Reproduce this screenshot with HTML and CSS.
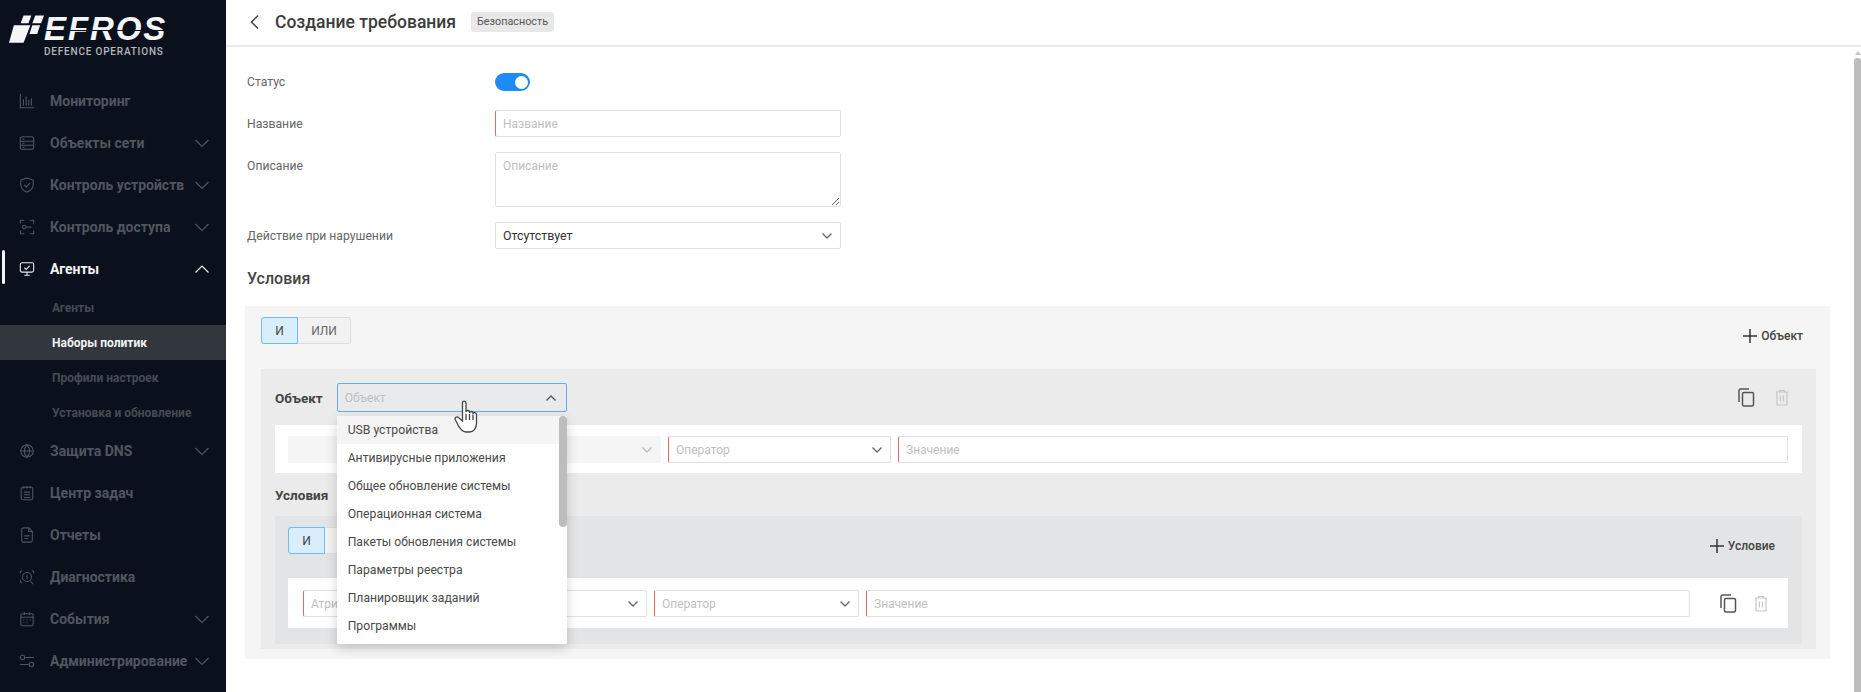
FILE: index.html
```html
<!DOCTYPE html>
<html lang="ru">
<head>
<meta charset="utf-8">
<title>Создание требования</title>
<link rel="stylesheet" href="styles.css">
</head>
<body>
<div class="app">
  <aside class="sidebar">
    <div class="logo">
      <svg class="logo-mark" width="35" height="30" viewBox="0 0 36 30"><path d="M15 0h8l-3 8h-8zM27 0h9l-3 8h-9zM5 10h17l-7 18H0zM24 10h8l-3 9h-8z" fill="#f4f5f6"/></svg>
      <div class="logo-text">
        <div class="logo-name">EFROS</div>
        <div class="logo-sub">DEFENCE OPERATIONS</div>
      </div>
    </div>
    <nav class="nav">
      <div class="nav-item"><svg class="nav-icon" viewBox="0 0 18 18"><path d="M1.500 1v15.500h15.500M5 7v7M8 4v10M11 8v6M14 6v8"/></svg><span class="nav-label">Мониторинг</span></div>
      <div class="nav-item"><svg class="nav-icon" viewBox="0 0 18 18"><rect x="1.500" y="2" width="15" height="14" rx="2"/><path d="M1.500 7h15M1.500 11.500h15M4 4.500h2M4 9.200h2M4 13.700h2"/></svg><span class="nav-label">Объекты сети</span><svg class="nav-chev" viewBox="0 0 16 10"><path d="M1.500 2l6.500 6.500L14.500 2"/></svg></div>
      <div class="nav-item"><svg class="nav-icon" viewBox="0 0 18 18"><path d="M9 1l7 2.500v5c0 4-3 7-7 8.500-4-1.500-7-4.500-7-8.500v-5zM6 9l2.200 2.200L12.200 7"/></svg><span class="nav-label">Контроль устройств</span><svg class="nav-chev" viewBox="0 0 16 10"><path d="M1.500 2l6.500 6.500L14.500 2"/></svg></div>
      <div class="nav-item"><svg class="nav-icon" viewBox="0 0 18 18"><path d="M1.500 5V1.500H6M12 1.500h4.500V5M1.500 13v3.500H6M12 16.500h4.500V13M8 9h6M12.500 9v1.500"/><circle cx="6" cy="9" r="2"/></svg><span class="nav-label">Контроль доступа</span><svg class="nav-chev" viewBox="0 0 16 10"><path d="M1.500 2l6.500 6.500L14.500 2"/></svg></div>
      <div class="nav-item nav-item-open"><svg class="nav-icon" viewBox="0 0 18 18"><rect x="1.500" y="2" width="15" height="10.500" rx="2"/><path d="M6 7.500l2 2 4-4M6 16h6M9 12.500V16"/></svg><span class="nav-label">Агенты</span><svg class="nav-chev" viewBox="0 0 16 10"><path d="M1.500 8.500L8 2l6.500 6.500"/></svg></div>
      <div class="nav-sub">Агенты</div>
      <div class="nav-sub nav-sub-active">Наборы политик</div>
      <div class="nav-sub">Профили настроек</div>
      <div class="nav-sub">Установка и обновление</div>
      <div class="nav-item"><svg class="nav-icon" viewBox="0 0 18 18"><circle cx="9" cy="9" r="7"/><path d="M2 9h14M9 2c-4 4-4 10 0 14M9 2c4 4 4 10 0 14"/></svg><span class="nav-label">Защита DNS</span><svg class="nav-chev" viewBox="0 0 16 10"><path d="M1.500 2l6.500 6.500L14.500 2"/></svg></div>
      <div class="nav-item"><svg class="nav-icon" viewBox="0 0 18 18"><rect x="2.500" y="2.500" width="13" height="14" rx="2"/><path d="M5.500 1v3M9 1v3M12.500 1v3M5.500 8h7M5.500 11h7M5.500 14h7"/></svg><span class="nav-label">Центр задач</span></div>
      <div class="nav-item"><svg class="nav-icon" viewBox="0 0 18 18"><path d="M3 3a2 2 0 0 1 2-2h6l4 4v10a2 2 0 0 1-2 2H5a2 2 0 0 1-2-2zM11 1v4h4M6 10h6M6 13h4"/></svg><span class="nav-label">Отчеты</span></div>
      <div class="nav-item"><svg class="nav-icon" viewBox="0 0 18 18"><path d="M1.500 5V3l2-1.500M16.500 5V3l-2-1.500M1.500 12v2l2 2M13 14l3 3"/><circle cx="9" cy="9" r="5"/><path d="M9 7v4"/></svg><span class="nav-label">Диагностика</span></div>
      <div class="nav-item"><svg class="nav-icon" viewBox="0 0 18 18"><rect x="2" y="3" width="14" height="13.500" rx="2"/><path d="M2 7h14M6 1v3.500M12 1v3.500M5 10h1M8.500 10h1M12 10h1M5 13h1M8.500 13h1"/></svg><span class="nav-label">События</span><svg class="nav-chev" viewBox="0 0 16 10"><path d="M1.500 2l6.500 6.500L14.500 2"/></svg></div>
      <div class="nav-item"><svg class="nav-icon" viewBox="0 0 18 18"><path d="M7 5h10M1 13h10"/><circle cx="4" cy="5" r="2.500"/><circle cx="14" cy="13" r="2.500"/></svg><span class="nav-label">Администрирование</span><svg class="nav-chev" viewBox="0 0 16 10"><path d="M1.500 2l6.500 6.500L14.500 2"/></svg></div>
    </nav>
  </aside>

  <main class="main">
    <header class="topbar">
      <svg class="back" width="11" height="16" viewBox="0 0 11 16"><path d="M9 1.500L2.500 8 9 14.500"/></svg>
      <h1 class="title">Создание требования</h1>
      <span class="badge">Безопасность</span>
    </header>
    <div class="body">
      <div class="content">
        <form class="form">
          <div class="form-row form-row-status">
            <span class="form-label">Статус</span>
            <span class="switch"><span class="switch-knob"></span></span>
          </div>
          <div class="form-row">
            <span class="form-label">Название</span>
            <input class="input input-required" placeholder="Название">
          </div>
          <div class="form-row form-row-top">
            <span class="form-label form-label-top">Описание</span>
            <textarea class="input textarea" placeholder="Описание"></textarea>
          </div>
          <div class="form-row">
            <span class="form-label">Действие при нарушении</span>
            <div class="select select-filled"><span>Отсутствует</span><svg class="chev" viewBox="0 0 12 8"><path d="M1.500 1.500L6 6l4.500-4.500"/></svg></div>
          </div>
        </form>

        <h2 class="section-title">Условия</h2>

        <section class="outer">
          <div class="toolbar">
            <div class="logic"><span class="logic-btn logic-on">И</span><span class="logic-btn">ИЛИ</span></div>
            <button type="button" class="add"><svg width="14" height="14" viewBox="0 0 14 14"><path d="M7 0v14M0 7h14"/></svg>Объект</button>
          </div>

          <div class="object">
            <div class="object-head">
              <span class="strong-label">Объект</span>
              <div class="object-select">
                <div class="select select-open"><span class="placeholder">Объект</span><svg class="chev" viewBox="0 0 12 8"><path d="M1.500 6.500L6 2l4.500 4.500"/></svg></div>
                <div class="menu">
                  <div class="menu-item menu-item-hover">USB устройства</div>
                  <div class="menu-item">Антивирусные приложения</div>
                  <div class="menu-item">Общее обновление системы</div>
                  <div class="menu-item">Операционная система</div>
                  <div class="menu-item">Пакеты обновления системы</div>
                  <div class="menu-item">Параметры реестра</div>
                  <div class="menu-item">Планировщик заданий</div>
                  <div class="menu-item">Программы</div>
                  <span class="menu-thumb"></span>
                </div>
                <svg class="hand" width="26" height="34" viewBox="0 0 26 34"><path d="M8.500 3c0-2.500 3.500-2.500 3.500 0v9c0-2 3.500-2 3.500 0v1c0-2 3.500-2 3.500 0v1c0-2 3.500-1.500 3.500.5V23c0 5-2.500 9-7 9h-3c-4 0-5-2-8-6L1.500 20c-1.500-2.500 1.500-4 3-2.500l4 3.500z"/><path d="M12 14v6M15.500 14v6M19 14.500V20"/></svg>
              </div>
              <div class="actions actions-head">
                <svg class="icon-copy" width="18" height="19" viewBox="0 0 18 19"><path d="M2 14V3a2 2 0 0 1 2-2h8"/><rect x="5.500" y="4.500" width="11" height="13.500" rx="1.500"/></svg>
                <svg class="icon-trash" width="14" height="17" viewBox="0 0 14 17"><path d="M1 3h12M4.500 3V1.500h5V3M2 3h10v13H2zM5.500 6.500v6M8.500 6.500v6"/></svg>
              </div>
            </div>

            <div class="row row-first">
              <div class="select select-disabled select-attr"><svg class="chev" viewBox="0 0 12 8"><path d="M1.500 1.500L6 6l4.500-4.500"/></svg></div>
              <div class="select select-op select-required"><span class="placeholder">Оператор</span><svg class="chev" viewBox="0 0 12 8"><path d="M1.500 1.500L6 6l4.500-4.500"/></svg></div>
              <input class="input input-required input-value" placeholder="Значение">
            </div>

            <div class="strong-label conditions-label">Условия</div>

            <div class="inner">
              <div class="toolbar toolbar-inner">
                <div class="logic"><span class="logic-btn logic-on">И</span><span class="logic-btn">ИЛИ</span></div>
                <button type="button" class="add"><svg width="14" height="14" viewBox="0 0 14 14"><path d="M7 0v14M0 7h14"/></svg>Условие</button>
              </div>
              <div class="row row-second">
                <div class="select select-attr2 select-required"><span class="placeholder">Атрибут</span><svg class="chev" viewBox="0 0 12 8"><path d="M1.500 1.500L6 6l4.500-4.500"/></svg></div>
                <div class="select select-op2 select-required"><span class="placeholder">Оператор</span><svg class="chev" viewBox="0 0 12 8"><path d="M1.500 1.500L6 6l4.500-4.500"/></svg></div>
                <input class="input input-required input-value" placeholder="Значение">
                <div class="actions actions-row">
                  <svg class="icon-copy" width="18" height="19" viewBox="0 0 18 19"><path d="M2 14V3a2 2 0 0 1 2-2h8"/><rect x="5.500" y="4.500" width="11" height="13.500" rx="1.500"/></svg>
                  <svg class="icon-trash" width="14" height="17" viewBox="0 0 14 17"><path d="M1 3h12M4.500 3V1.500h5V3M2 3h10v13H2zM5.500 6.500v6M8.500 6.500v6"/></svg>
                </div>
              </div>
            </div>
          </div>
        </section>
      </div>
      <div class="scrollbar">
        <span class="scroll-arrow"></span>
        <span class="scroll-thumb"></span>
      </div>
    </div>
  </main>
</div>
</body>
</html>
```

FILE: styles.css
```css
* { box-sizing: border-box; }
html, body { margin: 0; height: 100%; overflow: hidden; }
body { font-family: Roboto, "Noto Sans", sans-serif; color: #444; background: #fff; }
.app { display: flex; width: 1861px; height: 692px; }

/* sidebar */
.sidebar { width: 226px; flex: none; background: #0b111c; color: #50565f; }
.logo { height: 80px; display: flex; padding: 15px 0 0 9px; gap: 0; align-items: flex-start; }
.logo-mark { flex: none; }
.logo-text { display: flex; flex-direction: column; }
.logo-name { position: relative; font: italic 700 33px/28px "Liberation Sans", sans-serif; color: #f4f5f6; letter-spacing: 1.900px; height: 31px; padding-left: 0; }
.logo-name::after { content: ""; position: absolute; left: 0; right: 0; top: 15px; height: 1px; background: #0b111c; }
.logo-sub { font: 500 10px/12px Roboto, sans-serif; letter-spacing: .8px; color: #b4b8bd; white-space: nowrap; }
.nav { display: flex; flex-direction: column; }
.nav-item { position: relative; height: 42px; display: flex; align-items: center; padding-left: 19px; font-size: 14px; font-weight: 700; white-space: nowrap; }
.nav-icon { width: 16px; height: 16px; flex: none; fill: none; stroke: #50565f; stroke-width: 1.200; margin-right: 15px; }
.nav-label { flex: 1; }
.nav-chev { width: 16px; height: 10px; flex: none; fill: none; stroke: #50565f; stroke-width: 1.200; margin-right: 16px; }
.nav-item-open { color: #f2f3f4; }
.nav-item-open .nav-icon, .nav-item-open .nav-chev { stroke: #eceef0; }
.nav-item-open::before { content: ""; position: absolute; left: 2px; top: 2px; width: 3px; height: 34px; border-radius: 2px; background: #f4f5f6; }
.nav-sub { height: 35px; padding-left: 52px; display: flex; align-items: center; font-size: 12px; font-weight: 700; white-space: nowrap; color: #454b54; }
.nav-sub-active { background: #32373e; color: #f2f3f4; }

/* main */
.main { flex: 1; min-width: 0; display: flex; flex-direction: column; }
.topbar { height: 47px; flex: none; display: flex; align-items: center; padding: 0 0 2px 23px; border-bottom: 2px solid #e9e9e9; }
.back { fill: none; stroke: #444; stroke-width: 1.500; }
.title { margin: 0 0 0 15px; font-size: 17.500px; font-weight: 500; color: #3c3c3c; }
.badge { margin-left: 15px; height: 20px; padding: 0 6px; display: flex; align-items: center; background: #e8e8e8; border-radius: 3px; font-size: 10.800px; color: #555; }
.body { flex: 1; display: flex; min-height: 0; }
.content { flex: 1; min-width: 0; padding: 0 24px 0 19px; }
.scrollbar { width: 7px; flex: none; display: flex; flex-direction: column; align-items: center; padding-top: 4px; }
.scroll-arrow { width: 0; height: 0; border: 3px solid transparent; border-top: 0; border-bottom: 4px solid #c4c4c4; margin-bottom: 3px; }
.scroll-thumb { flex: 1; width: 7px; background: #bdbdbd; border-radius: 3px 3px 0 0; }

/* form */
.form { display: flex; flex-direction: column; gap: 15px; padding: 26px 0 0 2px; }
.form-row { display: grid; grid-template-columns: 248px 346px; align-items: center; }
.form-row-status { margin-bottom: 5px; height: 17px; }
.form-row-top { align-items: start; }
.form-label { font-size: 12.200px; color: #666; }
.form-label-top { padding-top: 7px; }
.switch { width: 35px; height: 18px; border-radius: 9px; background: #1e8cf8; display: flex; align-items: center; justify-content: flex-end; padding-right: 2px; }
.switch-knob { width: 13px; height: 13px; border-radius: 50%; background: #fff; }
.input { display: block; height: 27px; width: 100%; border: 1px solid #e0e0e0; border-radius: 2px; padding: 0 7px; font: 12px Roboto, sans-serif; color: #444; outline: 0; background: #fff; }
.input::placeholder { color: #c0c0c0; }
.input-required { border-left: 1px solid #e06b6b; }
.textarea { height: 55px; padding-top: 6px; }
.select { display: flex; align-items: center; justify-content: space-between; height: 27px; border: 1px solid #e0e0e0; border-radius: 2px; padding: 0 7px; background: #fff; font-size: 12px; }
.select-filled { color: #333; font-size: 12.400px; }
.chev { width: 12px; height: 8px; flex: none; fill: none; stroke: #666; stroke-width: 1.300; margin-left: auto; }
.placeholder { color: #c0c0c0; }
.section-title { margin: 21px 0 0 2px; height: 36px; line-height: 18px; font-size: 16px; font-weight: 500; color: #444; }

/* conditions */
.outer { background: #f5f5f5; padding: 11px 14px 10px 16px; }
.toolbar { display: flex; justify-content: space-between; align-items: flex-end; height: 27px; margin-bottom: 25px; }
.toolbar-inner { margin-bottom: 24px; padding-right: 14px; }
.logic { display: flex; height: 27px; font-size: 12px; }
.logic-btn { width: 53px; display: flex; align-items: center; justify-content: center; border: 1px solid #dcdcdc; border-left: 0; border-radius: 0 3px 3px 0; color: #666; background: #f2f2f2; }
.logic-on { width: 37px; border: 1px solid #6fbcf0; border-radius: 3px 0 0 3px; background: #d8eefc; color: #444; }
.add { display: flex; align-items: center; height: 16px; gap: 4px; padding: 0 13px 0 0; border: 0; background: none; font: 500 12px Roboto, sans-serif; color: #444; }
.add svg { fill: none; stroke: #333; stroke-width: 1.500; }
.object { background: #ebebeb; padding: 14px 14px 5px 14px; }
.object-head { display: flex; align-items: center; height: 29px; margin-bottom: 13px; }
.strong-label { font-size: 13.500px; font-weight: 700; color: #444; }
.object-select { position: relative; width: 230px; margin-left: 14px; }
.select-open { height: 29px; border-color: #5fb0ea; background: #e8eaec; padding-right: 9px; }
.select-open .chev { stroke: #555; }
.menu { position: absolute; z-index: 5; left: 0; top: 33px; width: 100%; height: 228px; background: #fff; border-radius: 0 0 2px 2px; box-shadow: 0 4px 12px rgba(0,0,0,.18); font-size: 12.200px; color: #4a4a4a; }
.menu-item { height: 28px; padding-left: 11px; display: flex; align-items: center; white-space: nowrap; }
.menu-item-hover { background: #f4f4f4; }
.menu-thumb { position: absolute; right: 0; top: 0; width: 8px; height: 111px; border-radius: 4px; background: #bdbdbd; }
.hand { position: absolute; z-index: 6; left: 117px; top: 17px; fill: #fff; stroke: #444; stroke-width: 1.300; }
.actions { display: flex; align-items: center; flex: none; }
.actions-head { margin-left: auto; gap: 20px; padding-right: 13px; }
.actions-row { gap: 17px; margin-left: 22px; }
.icon-copy { fill: none; stroke: #555; stroke-width: 1.500; }
.icon-trash { fill: none; stroke: #c4c6c8; stroke-width: 1.200; }
.row { display: flex; gap: 7px; background: #fff; }
.row-first { padding: 11px 14px 10px 13px; }
.select-attr { width: 373px; flex: none; }
.select-disabled { background: #f5f5f5; border-color: #f5f5f5; }
.select-disabled .chev { stroke: #bbb; }
.select-op { width: 223px; flex: none; }
.select-required { border-left-color: #e06b6b; }
.input-value { flex: 1; min-width: 0; }
.conditions-label { height: 43px; display: flex; align-items: center; }
.inner { background: #e3e4e6; padding: 11px 0 16px 13px; }
.row-second { padding: 12px 20px 11px 15px; margin-right: 14px; }
.select-attr2 { width: 344px; flex: none; }
.select-op2 { width: 205px; flex: none; }
```
